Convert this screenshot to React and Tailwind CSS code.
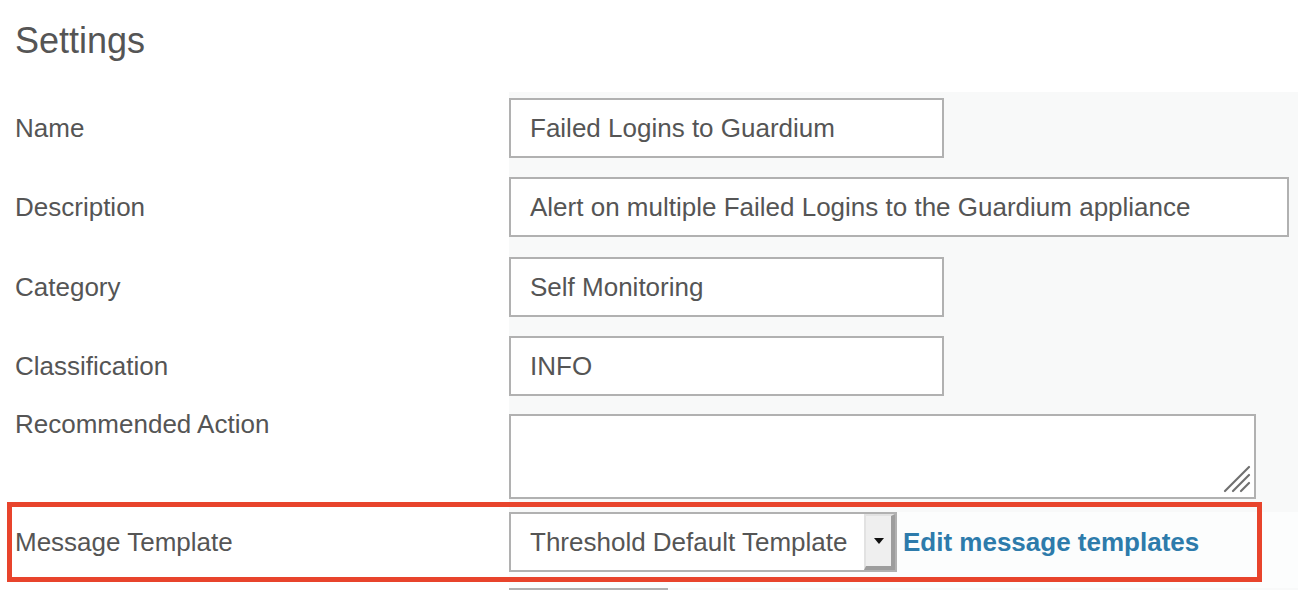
import React from 'react';

const Field = ({ label, children, fieldClass = '', labelClass = '', rowClass = '' }) => (
  <div className={`flex ${rowClass}`}>
    <div className={`w-[509px] shrink-0 pl-[15px] ${labelClass}`}>{label}</div>
    <div className={`flex-1 bg-[#f8f9f9] ${fieldClass}`}>{children}</div>
  </div>
);

const TextBox = ({ value, width }) => (
  <div className={`${width} h-[60px] border-2 border-[#b1b1b1] bg-white flex items-center pl-[19px] whitespace-nowrap`}>
    {value}
  </div>
);

const ResizeGrip = () => (
  <svg className="absolute right-[2px] bottom-[3px]" width="30" height="30" viewBox="0 0 30 30">
    <g stroke="#6f6f6f" strokeWidth="2.2" strokeLinecap="round">
      <line x1="27" y1="3" x2="3" y2="27" />
      <line x1="27" y1="11" x2="11" y2="27" />
      <line x1="27" y1="19" x2="19" y2="27" />
    </g>
  </svg>
);

const App = () => {
  return (
    <div className="w-full h-[590px] overflow-hidden bg-white text-[#555] font-['Liberation_Sans',Arial,sans-serif]">
      {/* Heading */}
      <div className="h-[92px] pl-[15px] pt-[23px]">
        <h1 className="text-[36px] leading-none">Settings</h1>
      </div>

      <div className="text-[26px] leading-none">
        {/* Name */}
        <Field label="Name" labelClass="pt-[6px] h-[66px] flex items-center" fieldClass="pt-[6px] pb-[19px]">
          <TextBox value="Failed Logins to Guardium" width="w-[435px]" />
        </Field>

        {/* Description */}
        <Field label="Description" labelClass="h-[60px] flex items-center" fieldClass="pb-[20px]">
          <TextBox value="Alert on multiple Failed Logins to the Guardium appliance" width="w-[780px]" />
        </Field>

        {/* Category */}
        <Field label="Category" labelClass="h-[60px] flex items-center" fieldClass="pb-[19px]">
          <TextBox value="Self Monitoring" width="w-[435px]" />
        </Field>

        {/* Classification */}
        <Field label="Classification" labelClass="h-[60px] flex items-center" fieldClass="pb-[18px]">
          <TextBox value="INFO" width="w-[435px]" />
        </Field>

        {/* Recommended Action */}
        <Field label="Recommended Action" labelClass="-mt-[3px]" fieldClass="pb-[13px]">
          <div className="relative w-[747px] h-[85px] border-2 border-[#b1b1b1] bg-white">
            <ResizeGrip />
          </div>
        </Field>

        {/* Message Template (highlighted) */}
        <div className="relative">
          <Field label="Message Template" labelClass="h-[60px] flex items-center" fieldClass="pb-[16px] bg-[#fcfdfd]">
            <div className="flex items-center">
              <div className="w-[388px] h-[60px] border-2 border-[#b1b1b1] bg-white flex items-center justify-between">
                <span className="pl-[19px] whitespace-nowrap">Threshold Default Template</span>
                <div className="w-[31px] h-full bg-[#efefef] border-l-2 border-t-2 border-[#e2e2e2] border-r-[4px] border-b-[4px] border-r-[#9d9d9d] border-b-[#9d9d9d] flex items-center justify-center">
                  <svg width="10" height="6" viewBox="0 0 10 6">
                    <path d="M0 0 L10 0 L5 6 Z" fill="#111" />
                  </svg>
                </div>
              </div>
              <a href="#" className="ml-[6px] font-bold text-[#2d7bab] whitespace-nowrap">
                Edit message templates
              </a>
            </div>
          </Field>
          <div className="absolute left-[7px] -top-[10px] w-[1255px] h-[80px] border-[5px] border-[#e8442c] pointer-events-none" />
        </div>

        {/* Next row (cut off) */}
        <Field label="" fieldClass="">
          <div className="w-[159px] h-[40px] border-2 border-[#b1b1b1] bg-white" />
        </Field>
      </div>
    </div>
  );
};

export default App;
